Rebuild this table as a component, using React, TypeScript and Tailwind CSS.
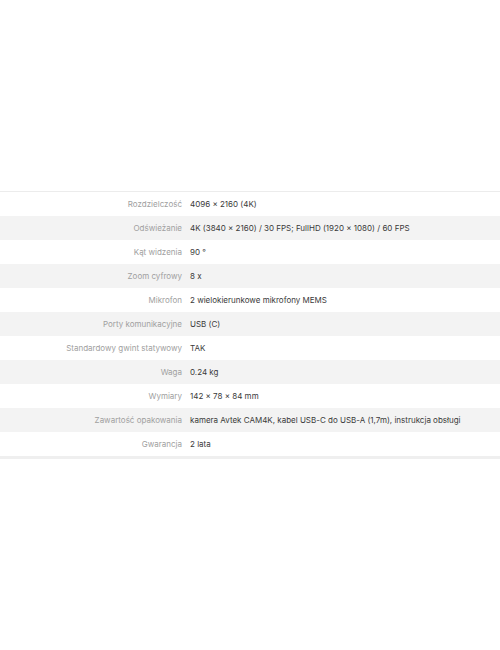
const specs: [string, string][] = [
  ["Rozdzielczość", "4096 × 2160 (4K)"],
  ["Odświeżanie", "4K (3840 × 2160) / 30 FPS; FullHD (1920 × 1080) / 60 FPS"],
  ["Kąt widzenia", "90 °"],
  ["Zoom cyfrowy", "8 x"],
  ["Mikrofon", "2 wielokierunkowe mikrofony MEMS"],
  ["Porty komunikacyjne", "USB (C)"],
  ["Standardowy gwint statywowy", "TAK"],
  ["Waga", "0.24 kg"],
  ["Wymiary", "142 × 78 × 84 mm"],
  ["Zawartość opakowania", "kamera Avtek CAM4K, kabel USB-C do USB-A (1,7m), instrukcja obsługi"],
  ["Gwarancja", "2 lata"],
];

export default function App() {
  return (
    <div
      className="flex h-[650px] w-[500px] flex-col justify-center bg-white"
      style={{ fontFamily: "Inter, 'Noto Sans', sans-serif" }}
    >
      <div className="border-t border-b-[3px] border-t-[#ececec] border-b-[#efefef]">
        {specs.map(([label, value], i) => (
          <div
            key={label}
            className={`flex h-6 items-center text-[8px] ${
              i % 2 === 1 ? "bg-[#f3f3f3]" : "bg-white"
            }`}
          >
            <div className="w-[182px] shrink-0 pr-0 text-right text-[#a0a0a0]">{label}</div>
            <div className="pl-2 text-[#3a3a3a]">{value}</div>
          </div>
        ))}
      </div>
    </div>
  );
}
